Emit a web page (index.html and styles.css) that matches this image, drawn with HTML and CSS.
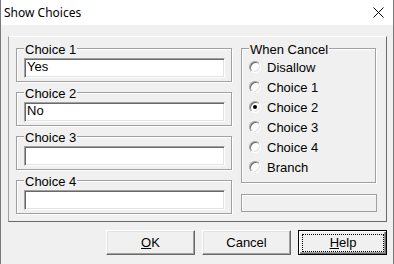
FILE: index.html
```html
<!DOCTYPE html>
<html lang="en">
<head>
  <meta charset="UTF-8" />
  <title>Show Choices</title>
  <link rel="stylesheet" href="styles.css">
</head>
<body>
  <div class="window">
    <div class="titlebar">
      <span class="title">Show Choices</span>
      <svg class="close" width="11" height="11" viewBox="0 0 11 11">
        <path d="M0.5 0.5 L10.5 10.5 M10.5 0.5 L0.5 10.5" stroke="#000" stroke-width="1" fill="none" />
      </svg>
    </div>

    <div class="client">
      <div class="panel">
        <!-- the four choice boxes -->
        <div class="choices">
          <fieldset class="group">
            <legend>Choice 1</legend>
            <div class="edit">Yes</div>
          </fieldset>
          <fieldset class="group">
            <legend>Choice 2</legend>
            <div class="edit">No</div>
          </fieldset>
          <fieldset class="group">
            <legend>Choice 3</legend>
            <div class="edit"></div>
          </fieldset>
          <fieldset class="group">
            <legend>Choice 4</legend>
            <div class="edit"></div>
          </fieldset>
        </div>

        <!-- cancel behaviour -->
        <div class="side">
          <fieldset class="group cancel">
            <legend>When Cancel</legend>
            <div class="option"><span class="radio"></span>Disallow</div>
            <div class="option"><span class="radio"></span>Choice 1</div>
            <div class="option"><span class="radio checked"></span>Choice 2</div>
            <div class="option"><span class="radio"></span>Choice 3</div>
            <div class="option"><span class="radio"></span>Choice 4</div>
            <div class="option"><span class="radio"></span>Branch</div>
          </fieldset>
          <div class="status"></div>
        </div>
      </div>

      <div class="buttons">
        <button class="btn"><u>O</u>K</button>
        <button class="btn">Cancel</button>
        <button class="btn default"><span class="focus"><u>H</u>elp</span></button>
      </div>
    </div>
  </div>
</body>
</html>
```

FILE: styles.css
```css
* {
  margin: 0;
  padding: 0;
  box-sizing: border-box;
}
html, body {
  height: 100%;
  overflow: hidden;
}
body {
  background: #fff;
  font-family: "Liberation Sans", Arial, sans-serif;
  font-size: 13px;
  color: #000;
}
.window {
  width: 394px;
  height: 264px;
  display: flex;
  flex-direction: column;
  background: #f0f0f0;
  border-left: 1px solid #7a7a7a;
  border-right: 1px solid #7a7a7a;
}
.titlebar {
  height: 25px;
  flex: none;
  background: #fff;
  display: flex;
  align-items: center;
  justify-content: space-between;
  padding: 0 9px 0 3px;
}
.title {
  font-family: "Noto Sans", sans-serif;
  font-size: 12px;
}
.close {
  display: block;
}
.client {
  flex: 1;
  padding: 11px 0 0 7px;
}
.panel {
  width: 379px;
  height: 186px;
  display: flex;
  gap: 9px;
  padding: 3px 0 0 7px;
  border: 1px solid;
  border-color: #fff #696969 #696969 #a0a0a0;
}
.choices {
  width: 216px;
  display: flex;
  flex-direction: column;
  gap: 2px;
}
.group {
  border: 1px solid #a0a0a0;
  box-shadow: inset 1px 1px 0 #fff, 1px 1px 0 #fff;
  padding: 2px 6px 3px 7px;
  min-width: 0;
}
.group legend {
  padding: 3px 1px 0;
  line-height: 13px;
  background: #f0f0f0;
}
.edit {
  height: 20px;
  width: 201px;
  padding: 1px 2px 0 2px;
  line-height: 14px;
  background: #fff;
  border: 1px solid;
  border-color: #a0a0a0 #fff #fff #a0a0a0;
  box-shadow: inset 1px 1px 0 #696969, inset -1px -1px 0 #e3e3e3;
}
.side {
  width: 136px;
  display: flex;
  flex-direction: column;
}
.cancel {
  width: 135px;
  height: 143px;
  padding: 1px 6px 5px 7px;
}
.option {
  height: 20px;
  display: flex;
  align-items: center;
}
.radio {
  width: 12px;
  height: 12px;
  margin-right: 6px;
  border-radius: 50%;
  background: #fff;
  border: 1px solid;
  border-color: #a0a0a0 #fff #fff #a0a0a0;
  box-shadow: inset 1px 1px 0 #696969, inset -1px -1px 0 #e3e3e3;
  display: flex;
  align-items: center;
  justify-content: center;
}
.radio.checked::after {
  content: "";
  width: 4px;
  height: 4px;
  border-radius: 50%;
  background: #000;
}
.status {
  margin-top: 11px;
  height: 18px;
  border: 1px solid #a0a0a0;
  box-shadow: inset 1px 1px 0 #fff;
}
.buttons {
  width: 379px;
  display: flex;
  justify-content: flex-end;
  gap: 7px;
  margin-top: 8px;
}
.btn {
  width: 89px;
  height: 25px;
  font: inherit;
  line-height: 16px;
  color: #000;
  background: #f0f0f0;
  border: 1px solid;
  border-color: #fff #696969 #696969 #fff;
  box-shadow: inset -1px -1px 0 #a0a0a0, inset 1px 1px 0 #e3e3e3;
  display: flex;
  align-items: center;
  justify-content: center;
}
.btn.default {
  border: 1px solid #000;
  box-shadow: inset 1px 1px 0 #fff, inset -1px -1px 0 #696969, inset -2px -2px 0 #a0a0a0;
  padding: 3px 2px 2px 3px;
}
.focus {
  flex: 1;
  align-self: stretch;
  display: flex;
  align-items: center;
  justify-content: center;
  border: 1px dotted #000;
}
```
